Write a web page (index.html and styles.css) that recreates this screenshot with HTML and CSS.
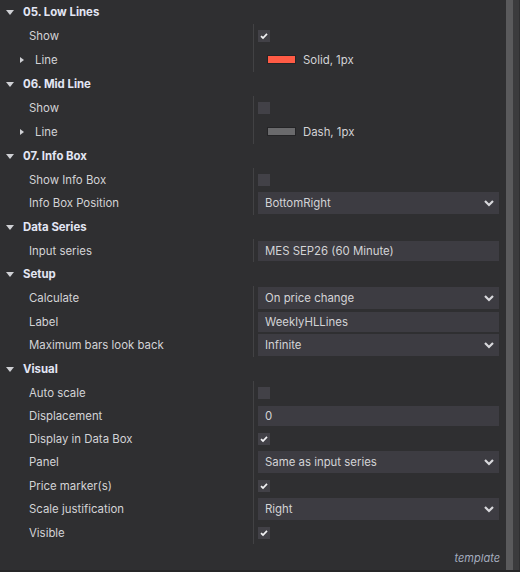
FILE: index.html
```html
<!DOCTYPE html>
<html lang="en">
<head>
    <meta charset="UTF-8">
    <title>Properties</title>
    <link rel="stylesheet" href="styles.css">
</head>
<body>
    <div class="window">
        <div class="content">
            <section class="group">
                <div class="group-head"><span class="caret-down"></span>05. Low Lines</div>
                <div class="row"><div class="name">Show</div><div class="value"><span class="check on"><svg viewBox="0 0 12 12"><polyline points="3,6.2 5,8 9,3.8"/></svg></span></div></div>
                <div class="row tall"><div class="name sub"><span class="caret-right"></span>Line</div><div class="value stroke"><span class="swatch red"></span>Solid, 1px</div></div>
            </section>

            <section class="group">
                <div class="group-head"><span class="caret-down"></span>06. Mid Line</div>
                <div class="row"><div class="name">Show</div><div class="value"><span class="check"></span></div></div>
                <div class="row tall"><div class="name sub"><span class="caret-right"></span>Line</div><div class="value stroke"><span class="swatch gray"></span>Dash, 1px</div></div>
            </section>

            <section class="group">
                <div class="group-head"><span class="caret-down"></span>07. Info Box</div>
                <div class="row"><div class="name">Show Info Box</div><div class="value"><span class="check"></span></div></div>
                <div class="row drop"><div class="name">Info Box Position</div><div class="value"><div class="select">BottomRight<svg viewBox="0 0 10 7"><polyline points="1,1 5,5 9,1"/></svg></div></div></div>
            </section>

            <section class="group">
                <div class="group-head"><span class="caret-down"></span>Data Series</div>
                <div class="row"><div class="name">Input series</div><div class="value"><div class="field">MES SEP26 (60 Minute)</div></div></div>
            </section>

            <section class="group">
                <div class="group-head"><span class="caret-down"></span>Setup</div>
                <div class="row drop"><div class="name">Calculate</div><div class="value"><div class="select">On price change<svg viewBox="0 0 10 7"><polyline points="1,1 5,5 9,1"/></svg></div></div></div>
                <div class="row"><div class="name">Label</div><div class="value"><div class="field">WeeklyHLLines</div></div></div>
                <div class="row drop"><div class="name">Maximum bars look back</div><div class="value"><div class="select">Infinite<svg viewBox="0 0 10 7"><polyline points="1,1 5,5 9,1"/></svg></div></div></div>
            </section>

            <section class="group">
                <div class="group-head"><span class="caret-down"></span>Visual</div>
                <div class="row"><div class="name">Auto scale</div><div class="value"><span class="check"></span></div></div>
                <div class="row"><div class="name">Displacement</div><div class="value"><div class="field">0</div></div></div>
                <div class="row"><div class="name">Display in Data Box</div><div class="value"><span class="check on"><svg viewBox="0 0 12 12"><polyline points="3,6.2 5,8 9,3.8"/></svg></span></div></div>
                <div class="row drop"><div class="name">Panel</div><div class="value"><div class="select">Same as input series<svg viewBox="0 0 10 7"><polyline points="1,1 5,5 9,1"/></svg></div></div></div>
                <div class="row"><div class="name">Price marker(s)</div><div class="value"><span class="check on"><svg viewBox="0 0 12 12"><polyline points="3,6.2 5,8 9,3.8"/></svg></span></div></div>
                <div class="row drop"><div class="name">Scale justification</div><div class="value"><div class="select">Right<svg viewBox="0 0 10 7"><polyline points="1,1 5,5 9,1"/></svg></div></div></div>
                <div class="row"><div class="name">Visible</div><div class="value"><span class="check on"><svg viewBox="0 0 12 12"><polyline points="3,6.2 5,8 9,3.8"/></svg></span></div></div>
            </section>

            <div class="footer">template</div>
        </div>
        <div class="scrollbar">
            <div class="thumb"></div>
            <div class="track"></div>
        </div>
    </div>
</body>
</html>
```

FILE: styles.css
```css
body {
    margin: 0;
    background-color: #2f2f31;
    font-family: Inter, "Noto Sans", sans-serif;
    font-size: 11.4px;
    color: #d3d3d6;
}

.window {
    display: flex;
    height: 570px;
    border-bottom: 2px solid #262628;
}

.content {
    flex: 1;
    display: flex;
    flex-direction: column;
}

/* group headers */
.group-head {
    height: 24px;
    display: flex;
    align-items: center;
    gap: 9px;
    padding-left: 6px;
    font-weight: bold;
    color: #e3e6f4;
}

.caret-down {
    width: 0;
    height: 0;
    border-left: 4px solid transparent;
    border-right: 4px solid transparent;
    border-top: 5px solid #cfd0d4;
}

.caret-right {
    width: 0;
    height: 0;
    border-top: 3.5px solid transparent;
    border-bottom: 3.5px solid transparent;
    border-left: 4px solid #cfd0d4;
}

/* property rows */
.row {
    display: grid;
    grid-template-columns: 253px 1fr;
    height: 23px;
}

.row.tall {
    height: 25px;
}

.row.drop {
    height: 24px;
}

.name {
    display: flex;
    align-items: center;
    padding-left: 29px;
}

.name.sub {
    padding-left: 20px;
    gap: 11px;
}

.value {
    display: flex;
    align-items: center;
    border-left: 1px solid #424244;
    padding: 0 7px 0 4px;
}

.value.stroke {
    padding-left: 13px;
    gap: 7px;
}

.check {
    width: 12px;
    height: 12px;
    background-color: #424147;
    display: flex;
}

.check svg {
    width: 12px;
    height: 12px;
    fill: none;
    stroke: #f2f2f4;
    stroke-width: 1.7;
}

.swatch {
    width: 27px;
    height: 7px;
    border: 1px solid #242426;
}

.swatch.red {
    background-color: #ff5b45;
}

.swatch.gray {
    background-color: #6a6a6c;
}

.select, .field {
    flex: 1;
    display: flex;
    align-items: center;
    justify-content: space-between;
    background-color: #3d3c42;
    padding-left: 7px;
}

.select {
    height: 22px;
    padding-right: 5px;
}

.field {
    height: 20px;
}

.select svg {
    width: 10px;
    height: 7px;
    fill: none;
    stroke: #d8d8dc;
    stroke-width: 2.2;
}

.footer {
    height: 24px;
    display: flex;
    align-items: center;
    justify-content: flex-end;
    margin-top: auto;
    padding-right: 6px;
    font-style: italic;
    font-size: 11px;
    color: #a4acbe;
}

/* right scrollbar strip */
.scrollbar {
    width: 14px;
    display: flex;
}

.thumb {
    width: 7px;
    background-color: #5a5a5c;
}

.track {
    width: 6px;
    background-color: #3b3b3d;
}
```
